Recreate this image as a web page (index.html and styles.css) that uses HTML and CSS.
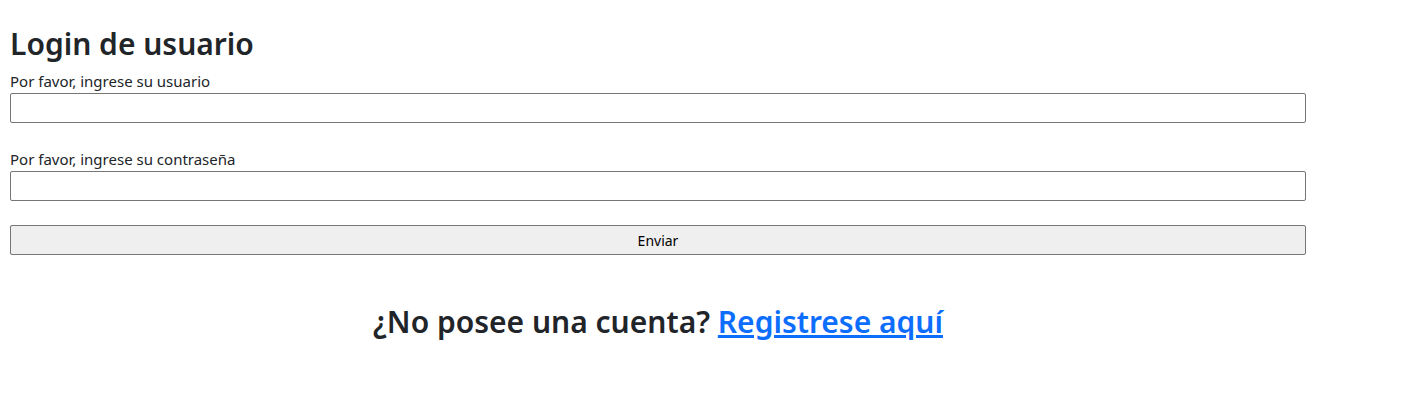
FILE: index.html
```html
<!DOCTYPE html>
<html lang="es">
<head>
<meta charset="utf-8">
<title>Login de usuario</title>
<link rel="stylesheet" href="styles.css">
</head>
<body>
<main class="page">
  <h2 class="title">Login de usuario</h2>
  <form class="login-form">
    <div class="field">
      <label class="field-label" for="usuario">Por favor, ingrese su usuario</label>
      <input class="field-input" id="usuario" type="text">
    </div>
    <div class="field">
      <label class="field-label" for="clave">Por favor, ingrese su contraseña</label>
      <input class="field-input" id="clave" type="password">
    </div>
    <button class="submit" type="submit">Enviar</button>
  </form>
  <h3 class="register">¿No posee una cuenta? <a class="register-link" href="#">Registrese aquí</a></h3>
</main>
</body>
</html>
```

FILE: styles.css
```css
html, body {
  margin: 0;
  padding: 0;
  background: #fff;
}
body {
  font-family: "Noto Sans", "Open Sans", sans-serif;
  color: #212529;
}
.page {
  width: 1296px;
  padding: 26px 0 0 10px;
}
.title {
  margin: 0;
  font-size: 30px;
  font-weight: 600;
  line-height: 1.2;
}
.login-form {
  display: flex;
  flex-direction: column;
  gap: 24px;
  margin-top: 7px;
}
.field {
  display: flex;
  flex-direction: column;
}
.field-label {
  font-size: 15px;
  line-height: 24px;
}
.field-input {
  box-sizing: border-box;
  width: 100%;
  height: 30px;
  margin: 0;
  border: 1px solid #767676;
  border-radius: 2px;
  background: #fff;
}
.submit {
  box-sizing: border-box;
  width: 100%;
  height: 30px;
  margin: 0;
  border: 1px solid #767676;
  border-radius: 2px;
  background: #efefef;
  font-family: inherit;
  font-size: 14px;
  color: #000;
}
.register {
  margin: 49px 0 0;
  text-align: center;
  font-size: 30px;
  font-weight: 600;
  line-height: 1.2;
}
.register-link {
  color: #0d6efd;
  text-decoration: underline;
}
```
